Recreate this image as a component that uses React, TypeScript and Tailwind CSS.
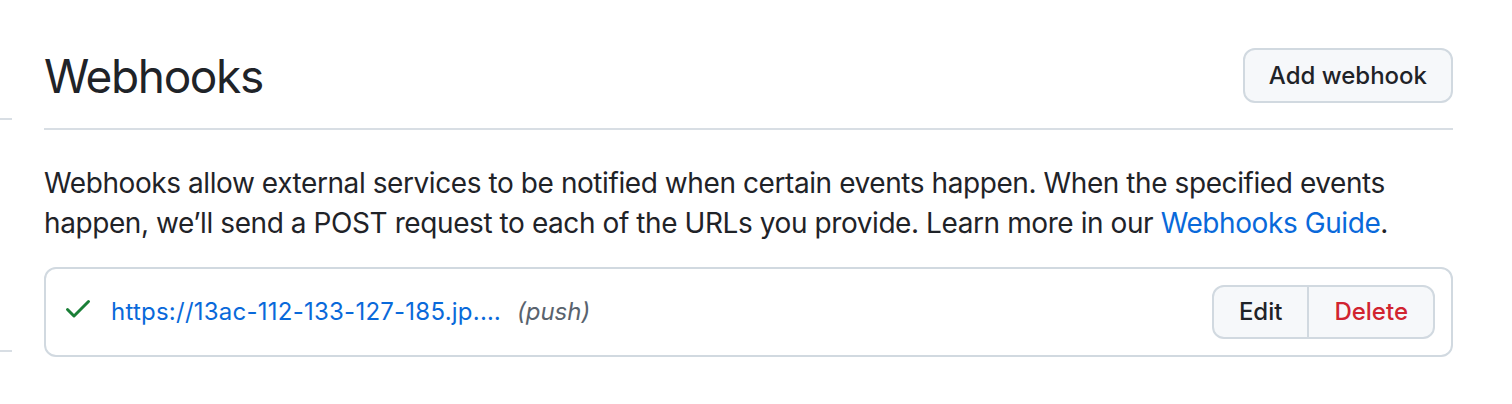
function CheckIcon() {
  return (
    <svg viewBox="0 0 16 16" width="32" height="32" fill="#1a7f37" aria-hidden="true">
      <path d="M13.78 4.22a.75.75 0 0 1 0 1.06l-7.25 7.25a.75.75 0 0 1-1.06 0L2.22 9.28a.751.751 0 0 1 .018-1.042.751.751 0 0 1 1.042-.018L6 10.94l6.72-6.72a.75.75 0 0 1 1.06 0Z" />
    </svg>
  );
}

export default function App() {
  return (
    <div
      className="flex w-[1512px] h-[404px] bg-white text-[#1f2328]"
      style={{ fontFamily: "Inter, 'Noto Sans', sans-serif" }}
    >
      {/* sidebar edge */}
      <div className="w-[12px] shrink-0">
        <div className="mt-[118px] h-[2px] bg-[#d8dee4]" />
        <div className="mt-[230px] h-[2px] bg-[#d8dee4]" />
      </div>

      <div className="ml-[32px] w-[1409px] pt-[40px]">
        <div className="flex items-center justify-between h-[72px] mb-[16px]">
          <h2 className="text-[46px] leading-[72px] font-normal tracking-[-0.03em]">Webhooks</h2>
          <button className="h-[55px] mb-[1px] px-[24px] rounded-[12px] border-2 border-[#d1d9e0] bg-[#f6f8fa] text-[24px] font-medium">
            Add webhook
          </button>
        </div>
        <div className="h-[2px] bg-[#d8dee4]" />

        <p className="mt-[33px] text-[28px] leading-[40px] tracking-[-0.015em]">
          Webhooks allow external services to be notified when certain events happen. When the specified events
          happen, we’ll send a POST request to each of the URLs you provide. Learn more in our{" "}
          <a className="text-[#0969da]">Webhooks Guide</a>.
        </p>

        <div className="mt-[24px] flex items-center rounded-[12px] border-2 border-[#d1d9e0] px-[16px] py-[16px]">
          <div className="mb-[8px]">
            <CheckIcon />
          </div>
          <a className="ml-[17px] text-[24px] tracking-[0.01em] text-[#0969da]">https://13ac-112-133-127-185.jp.…</a>
          <span className="ml-[16px] text-[24px] italic text-[#59636e]">(push)</span>
          <div className="ml-auto flex h-[54px] rounded-[12px] border-2 border-[#d1d9e0] bg-[#f6f8fa] text-[24px] font-medium">
            <button className="px-[25px]">Edit</button>
            <button className="px-[25px] border-l-2 border-[#d1d9e0] text-[#d1242f]">Delete</button>
          </div>
        </div>
      </div>
    </div>
  );
}
